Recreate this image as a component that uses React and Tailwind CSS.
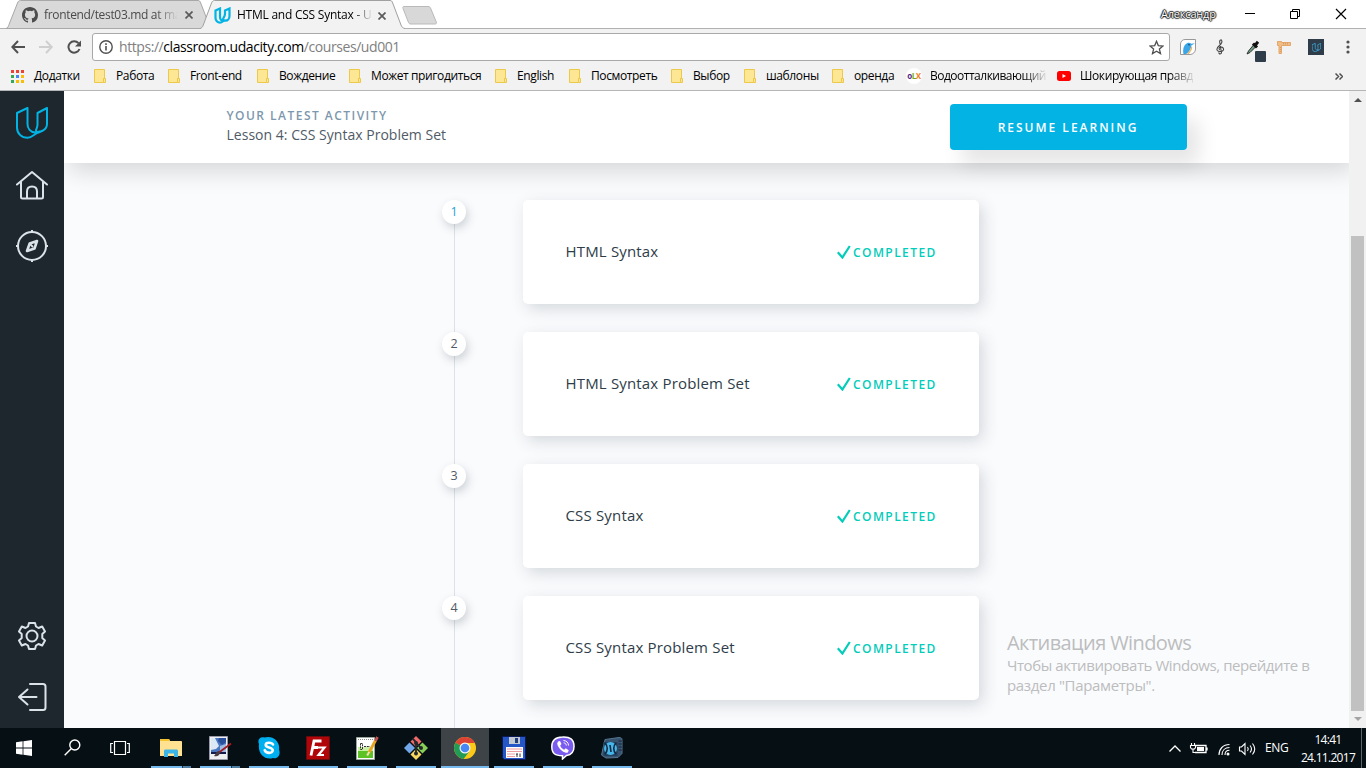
import React from "react";

const bookmarks = [
  { label: "Работа", w: "w-[74px]" },
  { label: "Front-end", w: "w-[89px]" },
  { label: "Вождение", w: "w-[92px]" },
  { label: "Может пригодиться", w: "w-[146px]" },
  { label: "English", w: "w-[74px]" },
  { label: "Посмотреть", w: "w-[102px]" },
  { label: "Выбор", w: "w-[73px]" },
  { label: "шаблоны", w: "w-[88px]" },
  { label: "оренда", w: "w-[74px]" },
];

const lessons = ["HTML Syntax", "HTML Syntax Problem Set", "CSS Syntax", "CSS Syntax Problem Set"];

function UdacityMark({ className, stroke = "#02b3e4", width = 2 }) {
  return (
    <svg className={className} viewBox="0 0 32 32" fill="none" stroke={stroke} strokeWidth={width} strokeLinejoin="round" strokeLinecap="round">
      <path d="M1 6 11.500 1v16c0 4.500 3 8 7.500 8.500 1.500.1 3-.2 4.500-1L18 28c-2 1.500-4 2.800-6.500 2.800C5.500 30.800 1 26.500 1 20.500Z" />
      <path d="M21.500 6 31 1v16c0 3-1.500 5-4 6.500l-4.500 2c-1.500 0-2.500-1-2.500-2.500.5-1.500 1.500-3 1.500-5.500Z" />
    </svg>
  );
}

function Folder() {
  return (
    <svg className="h-[14px] w-3 shrink-0" viewBox="0 0 12 14">
      <path d="M.5.5h10v9h-1v4H.5Z" fill="#fee794" stroke="#ecc94b" />
      <path d="M9.500 9.500h2v4h-2Z" fill="#fee794" stroke="#ecc94b" />
    </svg>
  );
}

function CloseX() {
  return (
    <svg className="mt-[2px] h-2 w-2 shrink-0" viewBox="0 0 8 8">
      <path d="M.5.5l7 7M7.500.5l-7 7" stroke="#5a5a5a" strokeWidth="1.700" />
    </svg>
  );
}

function TabStrip() {
  return (
    <div className="flex h-[28px] items-start bg-white text-[12px] leading-[28px]">
      <div className="relative ml-[6px] flex h-[28px] w-[206px] items-center">
        <svg className="absolute inset-0 h-[29px] w-[206px]" viewBox="0 0 206 29">
          <path d="M0 28.500 C2 28 2.500 26 3 24.500L11.500 3C12.300 1.200 13 .5 14.500.5H192c1.500 0 2 .8 2.700 2.500L202 22v6.500Z" fill="#d9d9d9" stroke="#a8a8a8" />
        </svg>
        <div className="relative flex w-full items-center pl-4">
          <svg className="mt-[2px] h-4 w-4 shrink-0" viewBox="0 0 16 16" fill="#4c4c4c">
            <path d="M8 0C3.580 0 0 3.580 0 8c0 3.540 2.290 6.530 5.470 7.590.4.070.55-.17.55-.38v-1.490c-2.010.37-2.530-.49-2.690-.94-.09-.23-.48-.94-.82-1.130-.28-.15-.68-.52-.01-.53.630-.01 1.080.58 1.230.82.720 1.210 1.870.87 2.330.66.070-.52.280-.87.510-1.070-1.780-.2-3.640-.89-3.640-3.950 0-.87.310-1.590.82-2.150-.08-.2-.36-1.020.08-2.120 0 0 .670-.21 2.200.82a7.600 7.600 0 0 1 4 0c1.530-1.040 2.200-.82 2.200-.82.440 1.100.16 1.920.08 2.120.510.56.82 1.270.82 2.150 0 3.070-1.870 3.750-3.650 3.950.29.250.54.730.54 1.480v2.200c0 .21.150.46.550.38A8 8 0 0 0 16 8c0-4.420-3.580-8-8-8Z" />
          </svg>
          <div className="mt-[2px] ml-[6px] w-[141px] whitespace-nowrap tracking-[-0.33px] text-[#4a4a4a] [mask-image:linear-gradient(to_right,black_112px,transparent_134px)]">frontend/test03.md at ma</div>
          <CloseX />
        </div>
      </div>
      <div className="relative z-10 -ml-[12px] flex h-[29px] w-[205px] items-center">
        <svg className="absolute inset-0 h-[30px] w-[205px]" viewBox="0 0 205 30">
          <path d="M0 30v-1.500C2 28 2.500 27 3.300 25L11.500 3C12.300 1.200 13 .5 14.500.5H190c1.500 0 2 .8 2.700 2.500L201 25c.8 2 1.500 3 4 3.500V30Z" fill="#f2f2f2" />
          <path d="M0 28.500C2 28 2.500 27 3.300 25L11.500 3C12.300 1.200 13 .5 14.500.5H190c1.500 0 2 .8 2.700 2.500L201 25c.8 2 1.500 3 4 3.500" fill="none" stroke="#a0a0a0" />
        </svg>
        <div className="relative flex w-full items-center pl-[14px]">
          <svg className="mt-[1px] h-[17px] w-[17px] shrink-0" viewBox="0 0 17 17" fill="none" stroke="#02b3e4" strokeWidth="2.200">
            <path d="M1.500 3.500 6 1.500v8c0 3 1.500 4.300 3.500 4.300C8 15 7 15.600 6 15.600c-2.500 0-4.500-2-4.500-4.600Z" />
            <path d="M11 3.500 15.500 1.500V9c0 3-2 4.700-4 4.700-2 .1-3-.7-2-2.700.8-1.300 1.500-2.500 1.500-4Z" />
          </svg>
          <div className="mt-px ml-[6px] w-[141px] whitespace-nowrap tracking-[-0.24px] text-black [mask-image:linear-gradient(to_right,black_116px,transparent_136px)]">HTML and CSS Syntax - U</div>
          <CloseX />
        </div>
      </div>
      <svg className="mt-[6px] -ml-[4px] h-[19px] w-[37px]" viewBox="0 0 37 19">
        <path d="M3 .5h24c1.500 0 2 .5 2.500 1.500l5.800 14c.5 1.200 0 2-1.300 2H10c-1.500 0-2-.5-2.500-1.500l-5.500-14C1.500 1 2 .5 3 .5Z" fill="#d8d8d8" stroke="#bababa" />
      </svg>
      <div className="ml-auto flex h-[28px] items-center">
        <div className="w-[84px] text-[11px] leading-[28px] tracking-[-0.2px] text-white [text-shadow:0_0_1px_#222,1px_0_1px_#222,-1px_0_1px_#222,0_1px_1px_#222,0_-1px_1px_#222]">Александр</div>
        <svg className="h-[12px] w-[121px]" viewBox="0 0 121 12" fill="none" stroke="#000">
          <path d="M0 5.500h10" />
          <path d="M45.500 3.500h7v7h-7ZM47.500 3V1.500h7v7H53" />
          <path d="M91 1l10 10M101 1l-10 10" strokeWidth="1.200" />
        </svg>
      </div>
    </div>
  );
}

function Toolbar() {
  return (
    <div className="flex h-[37px] items-center border-t border-[#b1b1b1] pl-[11px]">
      <svg className="h-[14px] w-[70px] shrink-0" viewBox="0 0 70 14" fill="none" strokeWidth="2">
        <path d="M14 7H1.500M7 1 1.300 7 7 13" stroke="#505050" />
        <path d="M28 7h12.500M35 1l5.700 6-5.700 6" stroke="#cfcfcf" />
        <path d="M68.500 9A5.700 5.700 0 1 1 67.500 3.200" stroke="#505050" />
        <path d="M70 .5v6h-6Z" fill="#505050" />
      </svg>
      <div className="ml-[11px] flex h-[28px] w-[1078px] items-center rounded-[3px] border border-[#a9a9a9] bg-white pl-[6px]">
        <svg className="h-[14px] w-[14px] shrink-0" viewBox="0 0 14 14" fill="none" stroke="#505050">
          <circle cx="7" cy="7" r="6.200" strokeWidth="1.400" />
          <path d="M7 6v4.500M7 3.200v1.700" strokeWidth="1.600" />
        </svg>
        <div className="ml-[6px] whitespace-nowrap text-[14px] leading-[26px] tracking-[-0.43px] text-[#808080]">
          https://<span className="text-black">classroom.udacity.com</span>/courses/ud001
        </div>
        <svg className="mr-[5px] ml-auto h-[15px] w-[15px]" viewBox="0 0 15 15">
          <path d="M7.500 1.300 9.300 5.600l4.700.4-3.600 3.100 1.100 4.500-4-2.400-4 2.400 1.100-4.500L1 6l4.700-.4Z" fill="none" stroke="#505050" strokeWidth="1.300" />
        </svg>
      </div>
      <svg className="ml-[10px] h-4 w-4 shrink-0" viewBox="0 0 16 16">
        <path d="M5 .5h10.500V10c0 3-2.500 5.500-5.500 5.500H.5V5C.5 2.500 2.500.5 5 .5Z" fill="#fff" stroke="#999" />
        <path d="M3.500 15C2.500 10 4 5.500 7 4.200c1.500-.8 3.300-.4 4.200.5L15 4.300 11.300 6.500C11 10 8.500 14 6 15Z" fill="#39a6e8" />
        <path d="M7 15c2-2 4-5 4.300-8l1 1.500C12 11 10 14 8.500 15Z" fill="#f4b25a" />
        <circle cx="9" cy="5.800" r=".7" fill="#123" />
      </svg>
      <svg className="ml-[20px] h-4 w-[9px] shrink-0" viewBox="0 0 9 16" fill="none" stroke="#444" strokeWidth="1.100">
        <path d="M5.600 14c-1 1.500-3 1-2.600-.6M5.500 14 3.700 3C3.500 1.500 4.500.8 5.200.8 6.500 2 6 4.500 3.500 6.500 1 8.500.5 10 1.200 11.200c1.300 2 5.700 1.500 6.300-.4.500-2.300-2.500-3.800-4-2.300-.8.900-.3 2 .5 2.300" />
      </svg>
      <svg className="mt-[7px] ml-[21px] h-[22px] w-5 shrink-0" viewBox="0 0 20 22">
        <path d="M1 14 2.500 11 7.500 5l2 2L4 12.500Z" fill="#6d9f84" stroke="#222" strokeWidth=".9" />
        <path d="m7 3.500 4 4M9 5.500 12 1.800" stroke="#111" strokeWidth="3" />
        <rect x="9" y="11" width="11" height="11" rx="1" fill="#2e3d49" />
      </svg>
      <svg className="ml-[11px] h-[14px] w-[14px] shrink-0" viewBox="0 0 14 14">
        <path d="M.5 1.500h4v1h9v3h-9v8H2v-8H.5Z" fill="#f3bd86" stroke="#e3a76b" />
        <path d="M6.500 3v1.500M8.500 3v1.500M10.500 3v1.500M3 7.500h1M3 9.500h1M3 11.500h1" stroke="#c08a55" strokeWidth=".6" />
      </svg>
      <div className="ml-[17px] flex h-4 w-4 shrink-0 items-center justify-center bg-[#2e3d49]">
        <UdacityMark className="h-[9px] w-[9px]" stroke="#3f9cc9" width={3.2} />
      </div>
      <svg className="ml-[22px] h-[14px] w-[4px] shrink-0" viewBox="0 0 4 14" fill="#505050">
        <circle cx="2" cy="2" r="1.600" />
        <circle cx="2" cy="7" r="1.600" />
        <circle cx="2" cy="12" r="1.600" />
      </svg>
    </div>
  );
}

function AppsGrid() {
  const colors = ["#ea4335", "#ea4335", "#ea4335", "#34a853", "#4285f4", "#fbbc05", "#34a853", "#fbbc05", "#fbbc05"];
  return (
    <svg className="h-[13px] w-[13px] shrink-0" viewBox="0 0 13 13">
      {colors.map((c, i) => (
        <rect key={i} x={(i % 3) * 5} y={Math.floor(i / 3) * 5} width="3" height="3" fill={c} />
      ))}
    </svg>
  );
}

function BookmarksBar() {
  return (
    <div className="flex h-[26px] items-center border-b border-[#b5b5b5] pb-[3px] pl-[11px] text-[12px] leading-5 tracking-[-0.38px] whitespace-nowrap text-black">
      <div className="flex w-[83px] shrink-0 items-center gap-[10px]">
        <AppsGrid />
        <span>Додатки</span>
      </div>
      {bookmarks.map((b) => (
        <div key={b.label} className={`flex shrink-0 items-center gap-[10px] ${b.w}`}>
          <Folder />
          <span>{b.label}</span>
        </div>
      ))}
      <div className="flex w-[151px] shrink-0 items-center gap-[8px]">
        <div className="flex h-4 w-4 items-center justify-center rounded-full bg-white pb-px text-[8px] leading-4 font-bold tracking-[-0.5px]">
          <span className="text-[#5b2a86]">o</span>
          <span className="text-[#6fae1b]">L</span>
          <span className="text-[#f47b20]">X</span>
        </div>
        <span className="w-[116px] tracking-[-0.5px] [mask-image:linear-gradient(to_right,black_94px,transparent_118px)]">Водоотталкивающий</span>
      </div>
      <div className="flex shrink-0 items-center gap-[9px]">
        <svg className="h-[10px] w-[14px]" viewBox="0 0 14 10">
          <rect width="14" height="10" rx="2.500" fill="#f00" />
          <path d="M5.500 3v4L9 5Z" fill="#fff" />
        </svg>
        <span className="w-[113px] [mask-image:linear-gradient(to_right,black_90px,transparent_116px)]">Шокирующая правд</span>
      </div>
      <svg className="mr-[23px] ml-auto h-[7px] w-[8px]" viewBox="0 0 8 7" fill="none" stroke="#505050" strokeWidth="1.500">
        <path d="m.5.5 3 3-3 3M4.500.5l3 3-3 3" />
      </svg>
    </div>
  );
}

function Sidebar() {
  return (
    <div className="flex w-16 shrink-0 flex-col items-center bg-[#1e272e] pt-[16px] pb-[15px]">
      <UdacityMark className="h-8 w-8" />
      <svg className="mt-[30px] h-8 w-8" viewBox="0 0 32 32" fill="none" stroke="#dbe2e8" strokeWidth="2" strokeLinecap="round" strokeLinejoin="round">
        <path d="M1 15.500 16 3l15 12.500M5 13v15c0 1 .5 1.500 1.500 1.500h19c1 0 1.500-.5 1.500-1.500V13" />
        <path d="M11 29V22.500c0-3 2-5 5-5s5 2 5 5V29" />
      </svg>
      <svg className="mt-[29px] h-8 w-8" viewBox="0 0 32 32" fill="none" stroke="#dbe2e8" strokeWidth="2">
        <circle cx="16" cy="16" r="14" />
        <path d="M16 0v3M16 29v3M0 16h3M29 16h3" />
        <path d="m21 11-7.300 2.500L11 21l7.500-2.500Z" strokeWidth="2.600" strokeLinejoin="round" />
        <path d="m14 14 3 3" />
      </svg>
      <svg className="mt-auto h-8 w-8" viewBox="0 0 32 32" fill="none" stroke="#dbe2e8" strokeWidth="2" strokeLinejoin="round">
        <path d="M13 3h6l1 3.500 2.500 1.500 3.700-1.500L29 11.500l-2.700 2.500v4l2.700 2.500-2.800 5-3.700-1.500L20 25.500 19 29h-6l-1-3.500L9.500 24l-3.700 1.500L3 20.500 5.700 18v-4L3 11.500l2.800-5L9.500 8 12 6.500Z" />
        <circle cx="16" cy="16" r="5.500" />
      </svg>
      <svg className="mt-[29px] h-8 w-8" viewBox="0 0 32 32" fill="none" stroke="#dbe2e8" strokeWidth="2" strokeLinecap="round" strokeLinejoin="round">
        <path d="M14 3h13c1.500 0 2.500 1 2.500 2.500v21c0 1.500-1 2.500-2.500 2.500H14" />
        <path d="M20.500 16H3M11.500 8.500 3 16l8.500 7.500" />
      </svg>
    </div>
  );
}

function ActivityHeader() {
  return (
    <div className="relative z-10 flex h-[72px] shrink-0 items-start bg-white pl-[162px] shadow-[5px_8px_25px_0_rgba(0,0,0,0.15)]">
      <div className="w-[724px] pt-[16px] pl-[0.5px]">
        <div className="text-[12px] leading-[18px] font-semibold tracking-[1.470px] text-[#7d97ad]">YOUR LATEST ACTIVITY</div>
        <div className="text-[14px] leading-[20px] tracking-[0.02px] text-[#4f5b66]">Lesson 4: CSS Syntax Problem Set</div>
      </div>
      <button className="mt-[13px] h-[46px] w-[237px] rounded-[4px] bg-[#02b3e4] pt-[1px] pr-[1px] text-[12px] font-semibold tracking-[2px] text-white shadow-[12px_15px_20px_0_rgba(0,0,0,0.1)]">RESUME LEARNING</button>
    </div>
  );
}

function LessonRow({ index, title }) {
  return (
    <div className="flex h-[104px] items-start">
      <div className={`z-[1] flex h-6 w-6 items-center justify-center rounded-full bg-white pb-px text-[12.500px] leading-[23px] shadow-[2px_4px_10px_0_rgba(46,61,73,0.22)] ${index === 1 ? "text-[#2a9fd6]" : "text-[#4f5b66]"}`}>{index}</div>
      <div className="ml-[57px] flex h-[104px] w-[456px] items-center rounded-[5px] bg-white pl-[42.500px] shadow-[4px_5px_16px_0_rgba(46,61,73,0.18)]">
        <div className="w-[271px] pb-[2px] text-[15px] tracking-[0.17px] text-[#2e3d49]">{title}</div>
        <svg className="-mt-px h-[14px] w-[14px]" viewBox="0 0 14 14" fill="none" stroke="#02ccba" strokeWidth="2.200">
          <path d="m.8 7.300 4.600 5.200L12.800 1" />
        </svg>
        <div className="ml-[2.500px] pt-[2px] text-[12px] font-semibold tracking-[1.420px] text-[#02ccba]">COMPLETED</div>
      </div>
    </div>
  );
}

function Scrollbar() {
  return (
    <div className="flex w-[17px] shrink-0 flex-col items-center bg-[#f1f1f1]">
      <svg className="mt-[7px] h-[4px] w-[8px]" viewBox="0 0 8 4" fill="#505050"><path d="M4 0 8 4H0Z" /></svg>
      <div className="mt-[134px] h-[475px] w-[13px] bg-[#c1c1c1]" />
      <svg className="mt-[6px] h-[4px] w-[8px]" viewBox="0 0 8 4" fill="#a3a3a3"><path d="M4 4 8 0H0Z" /></svg>
    </div>
  );
}

function TaskIcon({ name }) {
  const p = { className: "h-6 w-6", viewBox: "0 0 24 24" };
  switch (name) {
    case "explorer":
      return (<svg {...p}><path d="M1 4c0-.6.4-1 1-1h8l1 2h11c.6 0 1 .4 1 1v14H1Z" fill="#ffe291" /><path d="M2 3h8l1 2H1V4Z" fill="#f5c330" /><path d="M5 21v-6c0-.8.500-1.500 1.500-1.500h11c1 0 1.500.7 1.500 1.500v6h-4v-3.500H9V21Z" fill="#3bb4e8" /></svg>);
    case "paint":
      return (<svg {...p}><path d="M1.500.5h18v23h-18Z" fill="#eef0f2" stroke="#99a" /><path d="M3 2h15v15H3Z" fill="#4a78c0" /><path d="M3 2h4l4 8-3 3-5 1Z" fill="#dbe8f6" /><path d="M11 2h7v4l-4 3-4-4Z" fill="#2a4f9c" /><path d="M12 10l6-2v9h-6Z" fill="#9fbde4" /><path d="M3 16h15v2H3Z" fill="#101d4c" /><path d="M23 7.500 11 16.500" stroke="#a31a23" strokeWidth="1.800" /><path d="M11 15c-3 0-3 3-5 5 3 1 6-.5 6-3.500Z" fill="#4b3b42" /></svg>);
    case "skype":
      return (<svg {...p}><path d="M2 8C0 4 3 0 7.500 1.500c8-2.500 16 4 14.500 12C24 18 21 23.500 16 22 8 24.500.5 18 2 8Z" fill="#00aff0" /><path d="M16 8.500C15 6.500 8.800 5.800 8.700 9c0 3.200 7 1.800 7 5.300 0 3.500-6.700 3.300-8-.1" fill="none" stroke="#fff" strokeWidth="2.600" strokeLinecap="round" /></svg>);
    case "filezilla":
      return (<svg {...p}><rect x=".5" y=".5" width="23" height="23" fill="#b00609" stroke="#6e0c0c" strokeDasharray="1.500 1" /><path d="m5 19.500 3-14.500h7.500M6.500 11.500H12" fill="none" stroke="#fff" strokeWidth="2.800" /><path d="M12 11.500h6.500L12.500 19H18" fill="none" stroke="#fff" strokeWidth="2.200" /></svg>);
    case "notepad":
      return (<svg {...p}><path d="M1.500 1.500h18v22h-18Z" fill="#fff" stroke="#9aa59a" /><path d="M3 15h15v7H3Z" fill="#5cc226" /><path d="M3 11h15v4H3Z" fill="#c9f0a6" /><path d="M3 3.500h15" stroke="#8a8f8a" strokeDasharray="1 1" /><path d="M5.500 7.500h2v6h-2ZM9 10.500h6" fill="none" stroke="#333" strokeDasharray="2 .8" /><path d="M20.500 4.500 14 16.500" stroke="#e8a521" strokeWidth="2.800" /><path d="m22.500 1-2 3.800" stroke="#c2524f" strokeWidth="2.800" /><path d="m14.200 16-2 3.500" stroke="#f8e2b0" strokeWidth="2" /></svg>);
    case "git":
      return (<svg {...p}><path d="m12 0 5.500 5.500L12 11 6.500 5.500Z" fill="#f06a6a" /><path d="m5.500 6.500 5.500 5.500-5.500 5.500L0 12Z" fill="#72a7ea" /><path d="m18.500 6.500 5.500 5.500-5.500 5.500L13 12Z" fill="#88cf58" /><path d="m12 13 5.500 5.500L12 24l-5.500-5.500Z" fill="#f8d860" /><path d="M8.500 2.500 12 6v12M12 7l5 5" fill="none" stroke="#24282c" strokeWidth="1.800" /><circle cx="12" cy="7" r="2" fill="#24282c" /><circle cx="12" cy="17.500" r="2" fill="#24282c" /><circle cx="17" cy="12" r="2" fill="#24282c" /></svg>);
    case "chrome":
      return (<svg {...p}><circle cx="12" cy="12" r="11" fill="#fbc916" /><path d="M12 12 2.500 6.500a11 11 0 0 0 8 16.400L16 16Z" fill="#219b55" /><path d="M12 12 2.500 6.500A11 11 0 0 1 21.900 7H12Z" fill="#dc4335" /><circle cx="12" cy="12" r="5.500" fill="#f3f3f3" /><circle cx="12" cy="12" r="4.300" fill="#4688f4" /></svg>);
    case "floppy":
      return (<svg {...p}><path d="M.5.5h23v23H2l-1.500-2Z" fill="#2456c8" stroke="#0b1a55" /><path d="M7 1h11v7H7Z" fill="#c3c9d2" /><path d="M13 2h3v5h-3Z" fill="#23407e" /><path d="M4 11h17v11H4Z" fill="#fff" /><path d="M5 13h15M5 15.500h15M5 18h8M5 20.500h8" stroke="#ed9aa0" /><path d="M15 18v3M18 17.500v3.500M14 18h2" stroke="#333" /></svg>);
    case "viber":
      return (<svg {...p}><path d="M11.500 1C19 .6 23 3 23 10.500c0 6-2.500 8.300-7.500 9L11.500 23v-3.300C4 19.700.8 17.500.8 10.500.8 4 4 1.200 11.500 1Z" fill="#7a5cf0" stroke="#fff" strokeWidth="1.500" /><path d="M7 5.500 9 5l1.500 3-1.300 1.500c.6 2 2 3.400 4 4.200l1.500-1.500 3 2-.7 2c-1 1-3 .5-5.500-1C8.500 13 6.500 10 6.200 7.500Z" fill="#fff" /><path d="M12.500 4.500c3 .2 5 2.200 5 5M12.700 6.800c1.600.2 2.500 1.200 2.600 2.700" fill="none" stroke="#fff" /></svg>);
    default:
      return (<svg {...p}><path d="M5 3.500 19 1.500c2 0 3 .8 3 2v14l-4 4-12 .5-4.500-3Z" fill="#38536f" stroke="#557591" /><path d="M18.500 5H22M18.500 8H22M18.500 11H22M18.500 14H22" stroke="#17293c" /><path d="M3.500 6h14v14h-14Z" fill="#24415f" /><circle cx="10.500" cy="12.500" r="6.500" fill="#45b7ec" /><path d="M5 7c3 3 3 8 0 11M16 7c-3 3-3 8 0 11M10 9l1 7" stroke="#12283e" strokeWidth="1.600" fill="none" /></svg>);
  }
}

const tasks = [
  { name: "explorer", split: true },
  { name: "paint", split: true },
  { name: "skype" },
  { name: "filezilla" },
  { name: "notepad" },
  { name: "git" },
  { name: "chrome", active: true },
  { name: "floppy" },
  { name: "viber" },
  { name: "camera" },
];

function Taskbar() {
  return (
    <div className="flex h-10 shrink-0 bg-[#060f14] text-[12px] text-white">
      <svg className="mt-[12px] ml-4 h-4 w-4" viewBox="0 0 16 16" fill="#fff">
        <path d="M0 2.200 6.600 1.300V7.500H0ZM7.400 1.200 16 0v7.500H7.400ZM0 8.400h6.600v6.300L0 13.800ZM7.400 8.400H16V16l-8.600-1.200Z" />
      </svg>
      <svg className="mt-[11px] ml-8 h-[17px] w-[17px]" viewBox="0 0 17 17" fill="none" stroke="#fff" strokeWidth="1.400">
        <circle cx="10.800" cy="6" r="5" />
        <path d="M7.200 9.700.7 16.200" />
      </svg>
      <svg className="mt-[12px] ml-[29px] h-4 w-5" viewBox="0 0 20 16" fill="none" stroke="#fff" strokeWidth="1.200">
        <path d="M4.500 1.500h11v13h-11ZM3 3.500H.7v9H3M17 3.500h2.300v9H17" />
      </svg>
      <div className="ml-[17px] flex gap-px">
        {tasks.map((t) => (
          <div key={t.name} className={`flex h-10 w-12 flex-col items-center justify-between pt-2 ${t.active ? "bg-[#3d4347]" : ""}`}>
            <TaskIcon name={t.name} />
            <div className={`flex h-[2px] justify-end bg-[#76b9ed] ${t.active ? "w-12" : "w-10"}`}>
              {t.split && <div className="h-[2px] w-[9px] border-l border-[#22384a] bg-[#517ea3]" />}
            </div>
          </div>
        ))}
      </div>
      <div className="ml-auto flex items-center">
        <svg className="mt-[1px] h-[14px] w-[97px]" viewBox="0 0 97 14" fill="none" stroke="#fff" strokeWidth="1.300">
          <path d="m1.500 9.500 5.500-5.500 5.500 5.500" />
          <path d="M27 3.500h11v7H27M39 5.500v3" />
          <path d="M29 5h7v4h-7Z" fill="#fff" stroke="none" />
          <path d="M23.500 1v2.500M26.500 1v2.500M22.500 3.500h5v2l-1 1.500h-3l-1-1.500ZM25 7v3.500h3" strokeWidth="1.100" />
          <path d="M51 13C51 7 55 2.500 61.500 2.500M54 13c0-4.500 3-7.500 7.500-7.500M57 13c0-3 1.500-4.700 4.500-4.700" strokeWidth="1.100" />
          <circle cx="60" cy="12" r="1.500" fill="#fff" stroke="none" />
          <path d="M71.500 5h2l3.500-3.500v11L73.500 9h-2ZM79.500 5c1 1.300 1 2.700 0 4M82 3.500c1.700 2 1.700 5 0 7M84.500 1.500c2.700 3.300 2.700 7.700 0 11" strokeWidth="1.100" />
        </svg>
        <div className="w-[35px] tracking-[-0.4px]">ENG</div>
        <div className="w-[56px] pt-px text-center leading-[18px] tracking-[-0.7px]">
          <div>14:41</div>
          <div>24.11.2017</div>
        </div>
        <div className="ml-[5px] h-10 w-[5px] border-l border-[#5b6468]" />
      </div>
    </div>
  );
}

export default function App() {
  return (
    <div className="relative flex h-[768px] w-[1366px] flex-col overflow-hidden bg-[#fafbfc] font-['Open_Sans',sans-serif]">
      <TabStrip />
      <div className="bg-[#f2f2f2]">
        <Toolbar />
        <BookmarksBar />
      </div>
      <div className="flex min-h-0 flex-1">
        <Sidebar />
        <div className="flex min-w-0 flex-1 flex-col overflow-hidden bg-[#fafbfd]">
          <ActivityHeader />
          <div className="relative flex flex-1 flex-col gap-7 pt-[37px] pl-[378px]">
            <div className="absolute top-[37px] bottom-0 left-[390px] w-px bg-[#dbe2e8]" />
            {lessons.map((t, i) => (
              <LessonRow key={t} index={i + 1} title={t} />
            ))}
          </div>
        </div>
        <Scrollbar />
      </div>
      <Taskbar />
      <div className="absolute top-[630px] left-[1007px] z-20 whitespace-nowrap text-[#bcbdbe]">
        <div className="text-[20px] leading-[25px] tracking-[-0.6px]">Активация Windows</div>
        <div className="text-[15px] leading-[20px] tracking-[-0.43px]">Чтобы активировать Windows, перейдите в</div>
        <div className="text-[15px] leading-[20px] tracking-[-0.33px]">раздел "Параметры".</div>
      </div>
    </div>
  );
}
